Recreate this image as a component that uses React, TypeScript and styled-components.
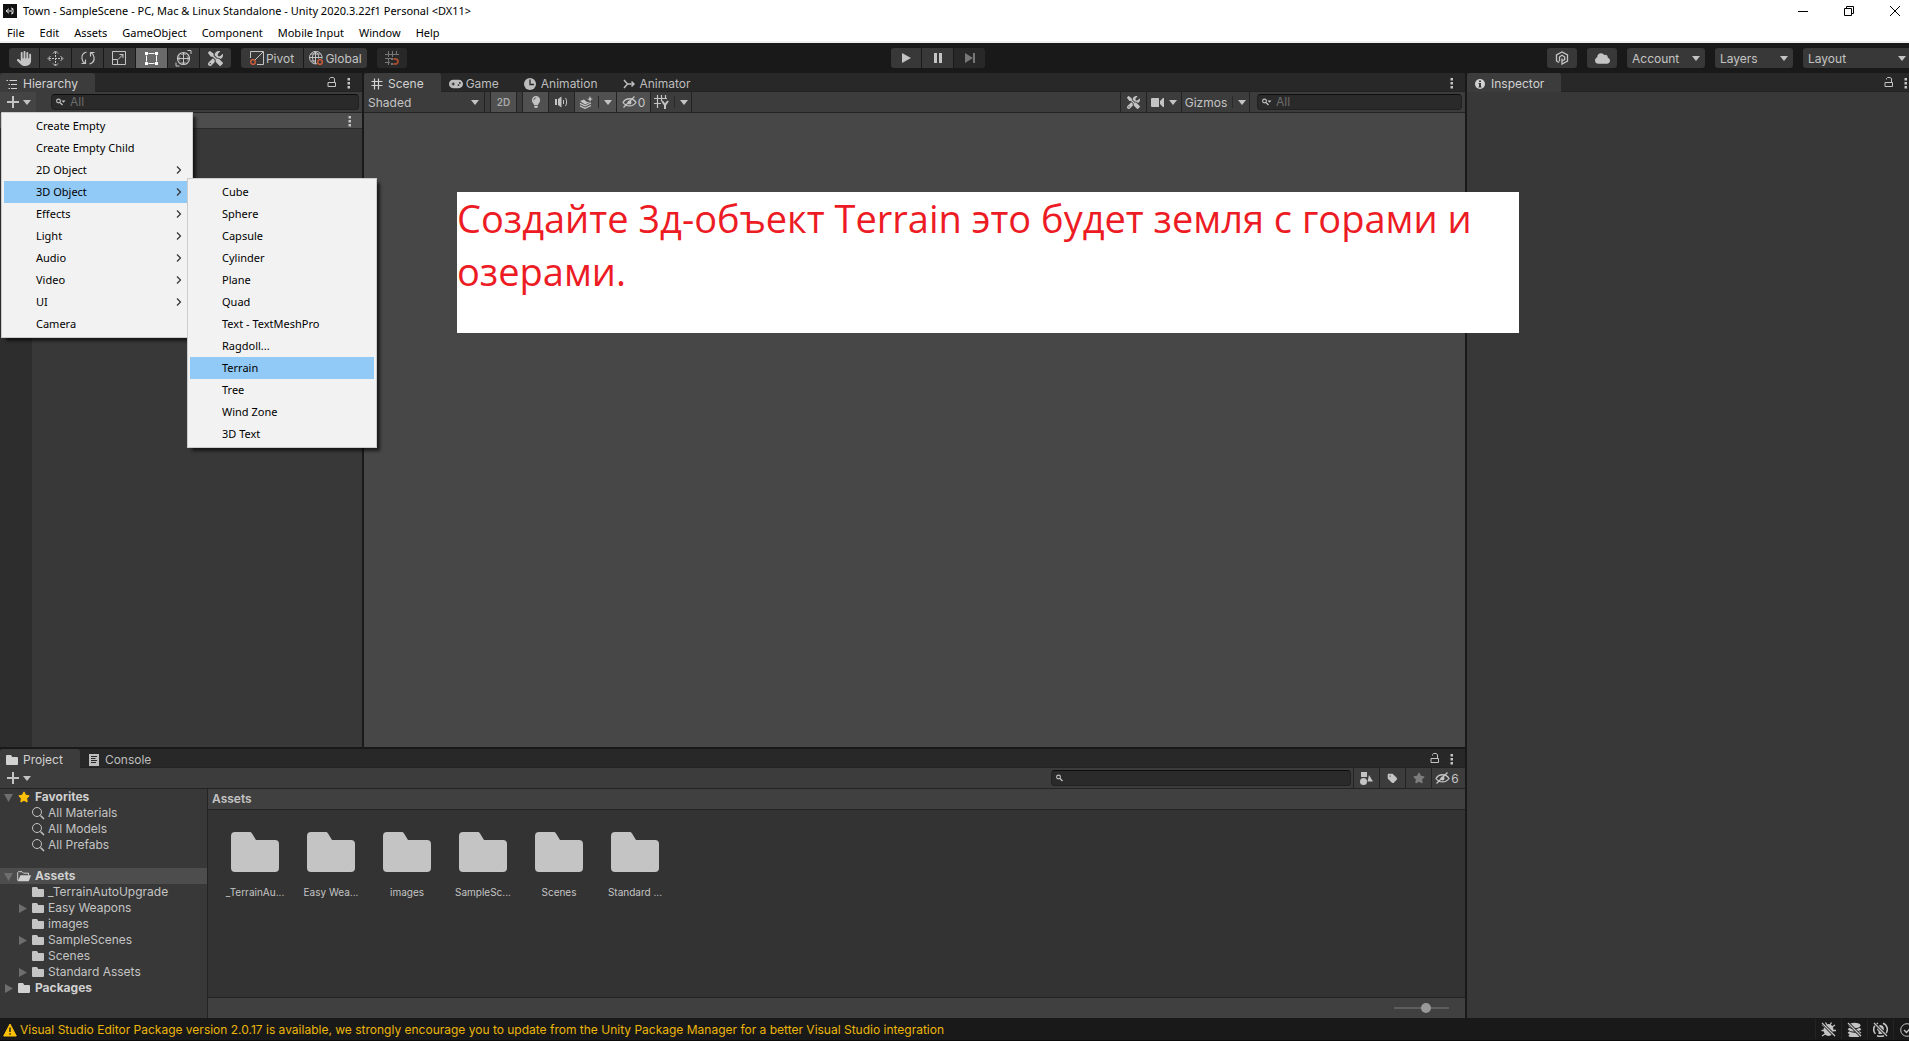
import React from 'react';
import styled, { createGlobalStyle, css } from 'styled-components';
import { FaHand, FaCloud, FaStar, FaGamepad, FaScrewdriverWrench, FaTag, FaLightbulb } from 'react-icons/fa6';

const ui = `Inter, "Liberation Sans", sans-serif`;
const system = `"Noto Sans", "Open Sans", sans-serif`;

const c = {
  chrome: '#191919',
  line: '#232323',
  tabs: '#282828',
  bar: '#3c3c3c',
  panel: '#383838',
  text: '#c4c4c4',
  active: '#505050',
};

const GlobalStyle = createGlobalStyle`
  *, *::before, *::after { box-sizing: border-box; }
  body { margin: 0; background: ${c.chrome}; overflow: hidden; }
  button, input, select { font: inherit; color: inherit; border: 0; margin: 0; padding: 0; background: none; border-radius: 0; outline: none; }
  ul { list-style: none; margin: 0; padding: 0; }
  svg { display: block; flex: none; }
`;

/* ---------- window ---------- */

const Window = styled.div`
  display: flex;
  flex-direction: column;
  height: 100vh;
  overflow: hidden;
  font: 12px/16px ${ui};
  color: ${c.text};
  white-space: nowrap;
`;

const TitleBar = styled.header`
  display: flex;
  align-items: center;
  height: 22px;
  padding-left: 3px;
  background: #fff;
  color: #000;
  font: 11px/16px ${system};
`;

const TitleText = styled.h1`
  margin: 0 0 0 6px;
  flex: 1;
  font: inherit;
`;

const WindowButton = styled.button`
  display: grid;
  place-items: center;
  width: 46px;
  height: 22px;
  &:last-child { margin-right: -9px; }
`;

const MenuBar = styled.nav`
  display: flex;
  gap: 1px;
  height: 21px;
  background: #fff;
  border-bottom: 2px solid #f0f0f0;
  color: #000;
  font: 11px/20px ${system};
`;

const MenuBarItem = styled.button`
  padding: 0 7px;
  height: 21px;
`;

/* ---------- main toolbar ---------- */

const MainToolbar = styled.div`
  display: grid;
  grid-template-columns: minmax(0, 42fr) auto minmax(0, 44fr);
  align-items: center;
  height: 30px;
  padding-left: 9px;
`;

const ToolSide = styled.div<{ $end?: boolean }>`
  display: flex;
  gap: 10px;
  justify-content: ${(p) => (p.$end ? 'flex-end' : 'flex-start')};
  ${(p) => p.$end && 'margin-right: -2px;'}
`;

const ButtonGroup = styled.div`
  display: flex;
  gap: 1px;
  border-radius: 3px;
  overflow: hidden;
`;

const ToolButton = styled.button<{ $w?: number; $on?: boolean; $dim?: boolean }>`
  display: flex;
  align-items: center;
  justify-content: center;
  gap: 2px;
  width: ${(p) => p.$w ?? 31}px;
  height: 20px;
  background: ${(p) => (p.$on ? '#6a6a6a' : p.$dim ? '#282828' : c.panel)};
  color: ${(p) => (p.$on ? '#fff' : p.$dim ? '#777' : c.text)};
`;

const Caption = styled.span`
  padding-top: 1px;
`;

const SelectBox = styled.label<{ $w: number; $bare?: boolean }>`
  display: grid;
  align-items: center;
  width: ${(p) => p.$w}px;
  height: 20px;
  background: ${(p) => (p.$bare ? 'transparent' : c.panel)};
  border-radius: ${(p) => (p.$bare ? 0 : 3)}px;
  > * { grid-area: 1 / 1; }
  > svg { justify-self: end; margin-right: 5px; pointer-events: none; }
`;

const Select = styled.select<{ $pad?: number }>`
  appearance: none;
  width: 100%;
  height: 20px;
  padding: 1px ${(p) => p.$pad ?? 5}px 0;
`;

/* ---------- panels ---------- */

const Workspace = styled.main`
  flex: 1;
  min-height: 0;
  display: grid;
  grid-template-columns: minmax(0, 1fr) 442px;
  gap: 2px;
`;

const LeftArea = styled.div`
  display: grid;
  grid-template-rows: minmax(0, 1fr) 269px;
  gap: 2px;
`;

const UpperArea = styled.div`
  display: grid;
  grid-template-columns: 362px minmax(0, 1fr);
  gap: 2px;
`;

const Panel = styled.section`
  display: flex;
  flex-direction: column;
  min-width: 0;
  min-height: 0;
  background: ${c.panel};
`;

const TabBar = styled.div`
  display: flex;
  gap: 1px;
  height: 19px;
  background: ${c.tabs};
  box-shadow: inset 0 -1px ${c.line};
`;

const Tab = styled.button<{ $on?: boolean; $flush?: boolean }>`
  display: flex;
  align-items: center;
  gap: 5px;
  height: 19px;
  padding: 2px 17px 0 ${(p) => (p.$flush ? 6 : 7)}px;
  color: ${(p) => (p.$on ? '#d2d2d2' : '#bdbdbd')};
  ${(p) => p.$on && css`background: ${c.bar}; border-radius: 3px 3px 0 0;`}
`;

const Slot = styled.span`
  display: grid;
  place-items: center;
  width: 12px;
  height: 16px;
`;

const TabTools = styled.div<{ $overhang?: boolean }>`
  display: flex;
  align-items: center;
  gap: 5px;
  margin: 0 ${(p) => (p.$overhang ? -3 : 7)}px 0 auto;
`;

const IconButton = styled.button`
  display: grid;
  place-items: center;
  width: 12px;
  height: 16px;
`;

const PanelBar = styled.div`
  display: flex;
  align-items: center;
  height: 21px;
  padding-right: 3px;
  background: ${c.bar};
  border-bottom: 1px solid ${c.line};
`;

const Spacer = styled.span<{ $w?: number }>`
  ${(p) => (p.$w ? `width: ${p.$w}px;` : 'flex: 1;')}
`;

const Anchor = styled.div`
  position: relative;
`;

const AddButton = styled.button<{ $on?: boolean }>`
  display: flex;
  align-items: center;
  gap: 4px;
  width: 36px;
  height: 20px;
  padding-left: 7px;
  background: ${(p) => (p.$on ? '#444' : 'transparent')};
`;

const SearchBox = styled.label<{ $w?: number }>`
  display: flex;
  align-items: center;
  gap: 4px;
  ${(p) => (p.$w ? `width: ${p.$w}px;` : 'flex: 1;')}
  height: 16px;
  padding: 0 4px;
  background: #2a2a2a;
  border: 1px solid #212121;
  border-top-color: #0d0d0d;
  border-radius: 4px;
`;

const SearchInput = styled.input`
  flex: 1;
  min-width: 0;
  height: 14px;
  &::placeholder { color: #6c6c6c; opacity: 1; }
`;

const BarButton = styled.button<{ $w: number; $on?: boolean; $dim?: boolean; $open?: boolean }>`
  display: flex;
  align-items: center;
  justify-content: center;
  gap: 1px;
  width: ${(p) => p.$w}px;
  height: 20px;
  border-left: 1px solid ${c.line};
  background: ${(p) => (p.$on ? c.active : 'transparent')};
  color: ${(p) => (p.$dim ? '#7d7d7d' : c.text)};
  ${(p) => p.$open && `border-right: 1px solid ${c.line};`}
`;

const Separator = styled.span`
  width: 6px;
  height: 20px;
  border-left: 1px solid ${c.line};
`;

const SmallCaption = styled.span`
  font-size: 10px;
  font-weight: 600;
  color: #a8a8a8;
`;

const Divider = styled.i`
  width: 1px;
  height: 12px;
  margin: 0 4px;
  background: #2a2a2a;
`;

const HierarchyBody = styled.div`
  flex: 1;
  background: linear-gradient(to right, #2d2d2d 32px, ${c.panel} 32px);
`;

const SceneRow = styled.div`
  display: flex;
  justify-content: flex-end;
  align-items: center;
  height: 16px;
  padding-right: 6px;
  background: #4d4d4d;
  border-bottom: 1px solid #2a2a2a;
`;

const SceneBody = styled.div`
  position: relative;
  flex: 1;
  background: #474747;
`;

const Note = styled.p`
  position: absolute;
  z-index: 1;
  left: 93px;
  top: 79px;
  width: 1062px;
  height: 141px;
  margin: 0;
  background: #fff;
  color: #ed1c24;
  font: 38px/53px "Open Sans", "Noto Sans", sans-serif;
  white-space: normal;
`;

/* ---------- pop-up menus ---------- */

const Menu = styled.ul<{ $w: number }>`
  position: absolute;
  z-index: 2;
  left: 1px;
  top: 20px;
  width: ${(p) => p.$w}px;
  padding: 2px;
  background: #f2f2f2;
  border: 1px solid #ccc;
  box-shadow: 4px 4px 3px -1px rgba(0, 0, 0, 0.6);
  color: #000;
  font: 11px/22px ${system};
`;

const SubMenu = styled(Menu)`
  left: 183px;
  top: -3px;
`;

const MenuItem = styled.li`
  position: relative;
`;

const MenuButton = styled.button<{ $on?: boolean }>`
  display: flex;
  align-items: center;
  justify-content: space-between;
  width: 100%;
  height: 22px;
  padding: 0 8px 0 32px;
  background: ${(p) => (p.$on ? '#91c9f7' : 'transparent')};
`;

/* ---------- project panel ---------- */

const ProjectBody = styled.div`
  flex: 1;
  min-height: 0;
  display: grid;
  grid-template-columns: 208px minmax(0, 1fr);
`;

const Tree = styled.ul`
  border-right: 1px solid ${c.line};
`;

const TreeRow = styled.li<{ $level?: number; $on?: boolean; $gap?: boolean }>`
  display: flex;
  align-items: center;
  height: 16px;
  padding-left: ${(p) => (p.$level ? 16 : 2)}px;
  margin-top: ${(p) => (p.$gap ? 15 : 0)}px;
  font-weight: ${(p) => (p.$level ? 400 : 700)};
  color: ${(p) => (p.$level ? c.text : '#d0d0d0')};
  background: ${(p) => (p.$on ? '#4d4d4d' : 'transparent')};
`;

const Twisty = styled.button`
  display: grid;
  place-items: center start;
  width: 14px;
  height: 16px;
  padding-left: 2px;
  color: #6e6e6e;
`;

const TreeIcon = styled.span<{ $level?: number }>`
  display: grid;
  place-items: center;
  width: 16px;
  margin-right: ${(p) => (p.$level ? 2 : 3)}px;
`;

const Browser = styled.div`
  display: flex;
  flex-direction: column;
  background: #333;
`;

const PathBar = styled.div`
  height: 21px;
  padding: 2px 4px;
  background: #404040;
  border-bottom: 1px solid ${c.line};
  font-weight: 600;
`;

const AssetGrid = styled.ul`
  flex: 1;
  display: flex;
  padding: 22px 0 0 9px;
`;

const Asset = styled.li`
  display: flex;
  flex-direction: column;
  align-items: center;
  gap: 13px;
  width: 76px;
  font-size: 10px;
  line-height: 14px;
`;

const ZoomBar = styled.label`
  display: flex;
  justify-content: flex-end;
  align-items: center;
  height: 21px;
  padding-right: 16px;
  background: #404040;
  border-top: 1px solid ${c.line};
`;

const Range = styled.input`
  appearance: none;
  width: 55px;
  height: 10px;
  background: linear-gradient(#5e5e5e, #5e5e5e) center / 100% 2px no-repeat;
  &::-webkit-slider-thumb {
    appearance: none;
    width: 10px;
    height: 10px;
    border-radius: 50%;
    background: #999;
  }
`;

/* ---------- status bar ---------- */

const StatusBar = styled.footer`
  display: flex;
  align-items: center;
  height: 23px;
  padding-left: 3px;
  border-bottom: 1px solid #0a0a0a;
`;

const StatusText = styled.button`
  display: flex;
  align-items: center;
  gap: 3px;
  padding-top: 1px;
  color: #ecb60a;
`;

const StatusTools = styled.div`
  display: flex;
  margin: 0 -10px 0 auto;
`;

const StatusButton = styled.button`
  display: grid;
  place-items: center;
  width: 26px;
  height: 20px;
  padding-top: 1px;
  border-left: 1px solid #242424;
`;

/* ---------- icons ---------- */

type IconProps = { w?: number; h?: number; box?: string; children: React.ReactNode };
const Icon = ({ w = 16, h = w, box = '0 0 16 16', children }: IconProps) => (
  <svg width={w} height={h} viewBox={box} fill="none" stroke="currentColor" aria-hidden="true">
    {children}
  </svg>
);
const solid = { fill: 'currentColor', stroke: 'none' };

const Caret = () => <Icon w={8} h={5} box="0 0 8 5"><path {...solid} d="M0 0h8L4 5z" /></Icon>;
const Dots = () => <Icon w={4} h={12} box="0 0 4 12"><path {...solid} d="M.5 1h2.500v2.500h-2.500zM.5 5h2.500v2.500h-2.500zM.5 9h2.500v2.500h-2.500z" /></Icon>;
const Plus = () => <Icon w={12} box="0 0 12 12"><path strokeWidth="2" d="M6 0v12M0 6h12" /></Icon>;
const Lock = () => <Icon w={10} h={11} box="0 0 10 11"><path d="M1 5.500h7.500v4h-7.500zM2.500 2.500v-1l1-1h2.500l1.500 1v4" /></Icon>;
const Lens = ({ arrow }: { arrow?: boolean }) => (
  <Icon w={10} h={8} box="0 0 10 8">
    <circle cx="2.500" cy="3" r="1.900" strokeWidth="1.100" />
    <path strokeWidth="1.200" d="M4 4.500L6.500 7" />
    {arrow && <path {...solid} d="M5.500 2.500h4l-2 2.200z" />}
  </Icon>
);
const BigLens = () => <Icon w={14} box="0 0 14 14"><circle cx="6" cy="6" r="4.500" /><path strokeWidth="1.500" d="M9.500 9.500L13 13" /></Icon>;
const ListIcon = () => <Icon w={12} box="0 0 12 12"><path d="M3.500 2.500H11M5 6.500H11M5 10.500H11M.5 2.500H2M2.500 6.500H4M2.500 10.500H4" /></Icon>;
const Hash = () => <Icon w={12} box="0 0 12 12"><path strokeWidth="1.200" d="M3.500 .5v11M7.500 .5v11M.5 3.500h11M.5 7.500h11" /></Icon>;
const Clock = () => <Icon w={12} box="0 0 12 12"><circle cx="6" cy="6" r="6" {...solid} /><path stroke={c.tabs} strokeWidth="1.300" d="M6 1.500v5h4" /></Icon>;
const Flow = () => <Icon w={12} box="0 0 12 12"><path strokeWidth="1.500" d="M1 2l3.500 4L1 10M4.500 6H11M8.500 3.500L11 6 8.500 8.500" /></Icon>;
const Info = () => <Icon w={10} box="0 0 10 10"><circle cx="5" cy="5" r="5" {...solid} /><path stroke={c.bar} strokeWidth="2" d="M5 1.500v1.500M5 4v4" /><path stroke={c.bar} d="M3.500 4.500H5M3.500 8h3" /></Icon>;
const Page = () => <Icon w={10} h={12} box="0 0 10 12"><path {...solid} d="M0 0h10v12H0z" /><path stroke={c.tabs} d="M2 2.500h6M2 4.500h4.500M2 6.500h6M2 8.500h5" /></Icon>;
const Folder = ({ w = 12, h = 10 }: { w?: number; h?: number }) => (
  <Icon w={w} h={h} box="0 0 48 40">
    <path {...solid} d="M4 0h14.500c1.500 0 2 .6 2.700 1.700L25 8h19a4 4 0 0 1 4 4v24a4 4 0 0 1-4 4H4a4 4 0 0 1-4-4V4a4 4 0 0 1 4-4z" />
  </Icon>
);
const OpenFolder = () => (
  <Icon w={14} h={11} box="0 0 14 11">
    <path d="M.7 9.500V1.500l.8-.8h3.500l1.500 1.500h5v2" />
    <path {...solid} d="M3.500 4.200H14l-2.200 6H.7z" />
  </Icon>
);
const Move = () => (
  <Icon w={17} box="0 0 17 17">
    <path strokeDasharray="2 1" d="M8.500 2v13M2 8.500h13" />
    <path d="M6 3.500L8.500 1 11 3.500M6 13.500L8.500 16 11 13.500M3.500 6L1 8.500 3.500 11M13.500 6L16 8.500 13.500 11" />
  </Icon>
);
const Rotate = () => (
  <Icon w={16}>
    <path strokeWidth="1.200" d="M6.500 2C3 3 1.500 6 2 9c.3 2 1.500 3.500 3 4.500M1.500 13.500h4v-4M9.500 14c3.500-1 5-4 4.500-7-.3-2-1.500-3.500-3-4.500M14.500 2.500h-4v4" />
  </Icon>
);
const Scale = () => <Icon w={15} box="0 0 15 15"><path d="M.5 .5h13v13H.5zM.5 8.500h5v5M6 8.500L11 3.500M7.500 3.500h3.500V7" /></Icon>;
const Rect = () => (
  <Icon w={15} box="0 0 15 15">
    <path d="M4.500 2.500h6M4.500 12.500h6M2.500 4.500v6M12.500 4.500v6" />
    <path {...solid} d="M1 1h3v3H1zM11 1h3v3h-3zM1 11h3v3H1zM11 11h3v3h-3z" />
  </Icon>
);
const Transform = () => (
  <Icon w={17} box="0 0 17 17">
    <circle cx="8.500" cy="8.500" r="6" strokeWidth="1.200" />
    <path d="M8.500 3v11M3 8.500h11M6.500 5L8.500 3l2 2M6.500 12l2 2 2-2M5 6.500l-2 2 2 2M12 6.500l2 2-2 2M12.500 .5H16V4M1 12.500V16h3.500" />
  </Icon>
);
const Pivot = () => (
  <Icon w={14} box="0 0 14 14">
    <path d="M.5 7V.5h13v13H7M4.500 9.500L13 1" />
    <circle cx="3" cy="11" r="2.300" stroke="#e0623c" strokeWidth="1.300" />
  </Icon>
);
const Globe = () => (
  <Icon w={14} box="0 0 14 14">
    <path d="M8 12.800a6.300 6.300 0 1 1 5-5M6.500 .5v12.500M.5 6.500h12.500M2 3h9.500M2 10h5M6.500 .5C2.500 4 2.500 9 6.500 13M6.500 .5c3 2 3.500 5 3 7" />
    <circle cx="11" cy="11" r="2.300" stroke="#e0623c" strokeWidth="1.300" />
  </Icon>
);
const Snap = () => (
  <Icon w={15} box="0 0 15 15">
    <path d="M3.500 0v6M7.500 0v6M11.500 0v4M0 3.500h14M0 7.500h6M3.500 7v7M0 11.500h5" />
    <path stroke="#a04a30" strokeWidth="2" d="M8.500 8h2a2.500 2.500 0 0 1 0 5h-2" />
    <path {...solid} d="M6 7h2v2H6zM6 12h2v2H6z" />
  </Icon>
);
const Play = () => <Icon w={9} h={10} box="0 0 9 10"><path {...solid} d="M0 0l9 5-9 5z" /></Icon>;
const Pause = () => <Icon w={8} h={10} box="0 0 8 10"><path {...solid} d="M0 0h3v10H0zM5 0h3v10H5z" /></Icon>;
const Step = () => <Icon w={10} h={10} box="0 0 10 10"><path {...solid} d="M0 0l8 5-8 5zM8 0h2v10H8z" /></Icon>;
const Collab = () => (
  <Icon w={14} box="0 0 14 14">
    <path strokeWidth="1.300" d="M4 11.500L1.500 10V4L7 1l5.500 3v6L7 13V7.500" />
    <path strokeWidth="1.300" d="M4.500 10.500V6L7 4.300 9.700 6v2.500L7 10" />
  </Icon>
);
const Speaker = () => (
  <Icon w={13} h={12} box="0 0 13 12">
    <path {...solid} d="M0 3h2v6H0zM3 3l3.500-2.500v11L3 9z" />
    <path d="M8.500 4v4M10.500 2c1.500 2 1.500 6 0 8" />
  </Icon>
);
const Layers = () => (
  <Icon w={14} h={13} box="0 0 14 13">
    <path {...solid} d="M1 5l4-1.500L8 6h3L6 8.500zM11 0l1 2.500 2 .5-2 .8L11 6l-1-2.200L8 3l2-.5z" />
    <path strokeWidth="1.300" d="M1 7.300L6 9.800 12 7M1 9.800L6 12.300 12 9.500" />
  </Icon>
);
const EyeOff = () => (
  <Icon w={15} h={12} box="0 0 15 12">
    <path strokeWidth="1.300" d="M1 6.500C4 1.500 11 1.500 14 6.500 11 11 4 11 1 6.500zM1.500 11.500L12.500 .5" />
    <circle cx="7.500" cy="6.500" r="2" {...solid} />
  </Icon>
);
const GridY = () => (
  <Icon w={15} h={14} box="0 0 15 14">
    <path strokeWidth="1.200" d="M3.500 0v13M7.500 0v6M11.500 0v4M0 3.500h13M0 8.500h7" />
    <path strokeWidth="2" d="M8 6l3 4 3-4M11 10v4" />
  </Icon>
);
const Camera = () => <Icon w={13} h={9} box="0 0 13 9"><path {...solid} d="M1 0h7v9H1a1 1 0 0 1-1-1V1a1 1 0 0 1 1-1zM9 3l3-3h1v9h-1L9 6z" /></Icon>;
const Shapes = () => (
  <Icon w={13} box="0 0 13 13">
    <path {...solid} d="M1 0h6v5H1zM9 3l4 6.500H7.500z" />
    <circle cx="3.500" cy="9.500" r="3.500" {...solid} />
  </Icon>
);
const Warning = () => (
  <Icon w={14} h={14} box="0 0 14 14">
    <path d="M7 1L13.300 13H.7z" fill="#ffc107" stroke="#ffc107" strokeLinejoin="round" />
    <path stroke="#222" strokeWidth="1.500" d="M7 4.500V9M7 10.200v1.500" />
  </Icon>
);
const Slash = () => <><path stroke={c.chrome} strokeWidth="3" d="M1 1l13 13" /><path strokeWidth="1.300" d="M1 1l13 13" /></>;
const BugOff = () => (
  <Icon w={15} box="0 0 15 15">
    <ellipse cx="7.500" cy="8" rx="5" ry="6" {...solid} />
    <path strokeWidth="1.300" d="M1 3l3 2M14 3l-3 2M.5 8.500H15M1 14l3-2M14 14l-3-2M4.500 .5L6 3M10.500 .5L9 3" />
    <Slash />
  </Icon>
);
const DataOff = () => (
  <Icon w={15} box="0 0 15 15">
    <ellipse cx="7.500" cy="3.500" rx="6" ry="2.700" {...solid} />
    <path strokeWidth="2.300" d="M1.500 6.500c2 2.500 10 2.500 12 0M1.500 10c2 2.500 10 2.500 12 0M2 13c2 1.500 9 1.500 11 0" />
    <Slash />
  </Icon>
);
const LightOff = () => (
  <Icon w={15} box="0 0 15 15">
    <path strokeWidth="1.600" d="M5 1.200a6.500 6.500 0 0 0-2.500 10.600M10 1.200a6.500 6.500 0 0 1 2.500 10.600M4 13.700c2 .8 5 .8 7 0" />
    <path {...solid} d="M7.500 3a3.500 3.500 0 0 1 2 6.300V12h-4V9.300A3.500 3.500 0 0 1 7.500 3z" />
    <Slash />
  </Icon>
);
const Done = () => <Icon w={14} box="0 0 14 14"><circle cx="7" cy="7" r="6.300" /><path strokeWidth="1.300" d="M4 7l2.500 2.500L10.500 5" /></Icon>;
const ChevronRight = () => <Icon w={6} h={8} box="0 0 6 8"><path stroke="#333" strokeWidth="1.200" d="M1 .5L4.500 4 1 7.500" /></Icon>;
const UnityMark = () => (
  <Icon w={14} box="0 0 14 14">
    <path fill="#111" stroke="none" d="M0 0h14v14H0z" />
    <path stroke="#ddd" d="M3 7h4.500M7.500 7L10 4.800M7.500 7l2.500 2.200M3 7l3-2.300M3 7l3 2.300M8 4l2 .7v4.600L8 10" />
  </Icon>
);
const Twist = ({ open }: { open?: boolean }) => (
  <Icon w={9} box="0 0 9 9"><path {...solid} d={open ? 'M0 1h9L4.500 9z' : 'M1 0l8 4.500L1 9z'} /></Icon>
);

/* ---------- data ---------- */

const menuBar = ['File', 'Edit', 'Assets', 'GameObject', 'Component', 'Mobile Input', 'Window', 'Help'];

const createMenu: [string, boolean][] = [
  ['Create Empty', false], ['Create Empty Child', false], ['2D Object', true], ['3D Object', true],
  ['Effects', true], ['Light', true], ['Audio', true], ['Video', true], ['UI', true], ['Camera', false],
];

const objectMenu = [
  'Cube', 'Sphere', 'Capsule', 'Cylinder', 'Plane', 'Quad', 'Text - TextMeshPro', 'Ragdoll...',
  'Terrain', 'Tree', 'Wind Zone', '3D Text',
];

type Node = { name: string; level?: number; kind: 'star' | 'lens' | 'open' | 'folder'; twisty?: 'open' | 'closed'; on?: boolean };
const tree: Node[] = [
  { name: 'Favorites', kind: 'star', twisty: 'open' },
  { name: 'All Materials', level: 1, kind: 'lens' },
  { name: 'All Models', level: 1, kind: 'lens' },
  { name: 'All Prefabs', level: 1, kind: 'lens' },
  { name: 'Assets', kind: 'open', twisty: 'open', on: true },
  { name: '_TerrainAutoUpgrade', level: 1, kind: 'folder' },
  { name: 'Easy Weapons', level: 1, kind: 'folder', twisty: 'closed' },
  { name: 'images', level: 1, kind: 'folder' },
  { name: 'SampleScenes', level: 1, kind: 'folder', twisty: 'closed' },
  { name: 'Scenes', level: 1, kind: 'folder' },
  { name: 'Standard Assets', level: 1, kind: 'folder', twisty: 'closed' },
  { name: 'Packages', kind: 'folder', twisty: 'closed' },
];

const treeIcons = {
  star: <FaStar size={12} color="#ffc107" />,
  lens: <BigLens />,
  open: <OpenFolder />,
  folder: <Folder />,
};

const assets = ['_TerrainAu...', 'Easy Wea...', 'images', 'SampleSc...', 'Scenes', 'Standard ...'];

const tools: [string, React.ReactNode, number][] = [
  ['Hand', <FaHand size={15} />, 30], ['Move', <Move />, 31], ['Rotate', <Rotate />, 31], ['Scale', <Scale />, 31],
  ['Rect', <Rect />, 31], ['Transform', <Transform />, 31], ['Custom tools', <FaScrewdriverWrench size={15} />, 31],
];

/* ---------- parts ---------- */

const Dropdown = ({ label, value, w, bare }: { label: string; value: string; w: number; bare?: boolean }) => (
  <SelectBox $w={w} $bare={bare}>
    <Select aria-label={label} $pad={bare ? 4 : 5}><option>{value}</option></Select>
    <Caret />
  </SelectBox>
);

const PanelTab = ({ icon, name, on, flush }: { icon: React.ReactNode; name: string; on?: boolean; flush?: boolean }) => (
  <Tab role="tab" aria-selected={!!on} $on={on} $flush={flush}><Slot>{icon}</Slot>{name}</Tab>
);

const TabActions = ({ lock, overhang }: { lock?: boolean; overhang?: boolean }) => (
  <TabTools $overhang={overhang}>
    {lock && <IconButton aria-label="Lock"><Lock /></IconButton>}
    <IconButton aria-label="More"><Dots /></IconButton>
  </TabTools>
);

const CreateMenu = () => (
  <Menu role="menu" $w={192}>
    {createMenu.map(([name, more]) => {
      const open = name === '3D Object';
      return (
        <MenuItem key={name} role="none">
          <MenuButton role="menuitem" $on={open}>{name}{more && <ChevronRight />}</MenuButton>
          {open && (
            <SubMenu role="menu" $w={190}>
              {objectMenu.map((item) => (
                <MenuItem key={item} role="none">
                  <MenuButton role="menuitem" $on={item === 'Terrain'}>{item}</MenuButton>
                </MenuItem>
              ))}
            </SubMenu>
          )}
        </MenuItem>
      );
    })}
  </Menu>
);

const Hierarchy = () => (
  <Panel>
    <TabBar role="tablist">
      <PanelTab icon={<ListIcon />} name="Hierarchy" on flush />
      <TabActions lock />
    </TabBar>
    <PanelBar>
      <Anchor>
        <AddButton aria-label="Create" $on><Plus /><Caret /></AddButton>
        <CreateMenu />
      </Anchor>
      <Spacer $w={15} />
      <SearchBox><Lens arrow /><SearchInput aria-label="Search hierarchy" placeholder="All" /></SearchBox>
    </PanelBar>
    <HierarchyBody>
      <SceneRow><IconButton aria-label="Scene options"><Dots /></IconButton></SceneRow>
    </HierarchyBody>
  </Panel>
);

const Scene = () => (
  <Panel>
    <TabBar role="tablist">
      <PanelTab icon={<Hash />} name="Scene" on />
      <PanelTab icon={<FaGamepad size={14} />} name="Game" />
      <PanelTab icon={<Clock />} name="Animation" />
      <PanelTab icon={<Flow />} name="Animator" />
      <TabActions />
    </TabBar>
    <PanelBar>
      <Dropdown label="Draw mode" value="Shaded" w={120} bare />
      <Separator />
      <BarButton $w={27} $on $open><SmallCaption>2D</SmallCaption></BarButton>
      <Spacer $w={5} />
      <BarButton $w={26} $on aria-label="Lighting"><FaLightbulb size={12} /></BarButton>
      <BarButton $w={26} aria-label="Audio"><Speaker /></BarButton>
      <BarButton $w={42} $on aria-label="Effects"><Layers /><Divider /><Caret /></BarButton>
      <BarButton $w={34} $on aria-label="Hidden objects"><EyeOff /><Caption>0</Caption></BarButton>
      <BarButton $w={42} $open aria-label="Grid"><GridY /><Divider /><Caret /></BarButton>
      <Spacer />
      <BarButton $w={26} aria-label="Tools"><FaScrewdriverWrench size={13} /></BarButton>
      <BarButton $w={35} aria-label="Camera"><Camera /><Spacer $w={3} /><Caret /></BarButton>
      <BarButton $w={69} $open><Caption>Gizmos</Caption><Divider /><Caret /></BarButton>
      <Spacer $w={7} />
      <SearchBox $w={205}><Lens arrow /><SearchInput aria-label="Search scene" placeholder="All" /></SearchBox>
    </PanelBar>
    <SceneBody>
      <Note>Создайте 3д-объект Terrain это будет земля с горами и озерами.</Note>
    </SceneBody>
  </Panel>
);

const Project = () => (
  <Panel>
    <TabBar role="tablist">
      <PanelTab icon={<Folder />} name="Project" on flush />
      <PanelTab icon={<Page />} name="Console" />
      <TabActions lock />
    </TabBar>
    <PanelBar>
      <AddButton aria-label="Create asset"><Plus /><Caret /></AddButton>
      <Spacer />
      <SearchBox $w={300}><Lens /><SearchInput aria-label="Search project" /></SearchBox>
      <Spacer $w={2} />
      <BarButton $w={26} aria-label="Search by type"><Shapes /></BarButton>
      <BarButton $w={26} aria-label="Search by label"><FaTag size={11} /></BarButton>
      <BarButton $w={26} $dim aria-label="Save search"><FaStar size={12} /></BarButton>
      <BarButton $w={31} aria-label="Hidden packages"><EyeOff /><Caption>6</Caption></BarButton>
    </PanelBar>
    <ProjectBody>
      <Tree>
        {tree.map((n) => (
          <TreeRow key={n.name} $level={n.level} $on={n.on} $gap={n.on}>
            {n.twisty ? <Twisty aria-label={`Toggle ${n.name}`}><Twist open={n.twisty === 'open'} /></Twisty> : <Spacer $w={14} />}
            <TreeIcon $level={n.level}>{treeIcons[n.kind]}</TreeIcon>
            {n.name}
          </TreeRow>
        ))}
      </Tree>
      <Browser>
        <PathBar>Assets</PathBar>
        <AssetGrid>
          {assets.map((name) => (
            <Asset key={name}><Folder w={48} h={40} />{name}</Asset>
          ))}
        </AssetGrid>
        <ZoomBar><Range type="range" aria-label="Icon size" defaultValue={60} /></ZoomBar>
      </Browser>
    </ProjectBody>
  </Panel>
);

export default function App() {
  return (
    <Window>
      <GlobalStyle />
      <TitleBar>
        <UnityMark />
        <TitleText>Town - SampleScene - PC, Mac &amp; Linux Standalone - Unity 2020.3.22f1 Personal &lt;DX11&gt;</TitleText>
        <WindowButton aria-label="Minimize"><Icon w={10} box="0 0 10 10"><path stroke="#000" d="M0 5.500h10" /></Icon></WindowButton>
        <WindowButton aria-label="Restore"><Icon w={10} box="0 0 10 10"><path stroke="#000" d="M.5 2.500h7v7h-7zM2.500 2.500v-2h7v7h-2" /></Icon></WindowButton>
        <WindowButton aria-label="Close"><Icon w={10} box="0 0 10 10"><path stroke="#000" d="M0 0l10 10M10 0L0 10" /></Icon></WindowButton>
      </TitleBar>
      <MenuBar>{menuBar.map((m) => <MenuBarItem key={m}>{m}</MenuBarItem>)}</MenuBar>

      <MainToolbar>
        <ToolSide>
          <ButtonGroup>
            {tools.map(([name, icon, w]) => <ToolButton key={name} aria-label={name} $w={w} $on={name === 'Rect'}>{icon}</ToolButton>)}
          </ButtonGroup>
          <ButtonGroup>
            <ToolButton $w={62}><Pivot /><Caption>Pivot</Caption></ToolButton>
            <ToolButton $w={63}><Globe /><Caption>Global</Caption></ToolButton>
          </ButtonGroup>
          <ButtonGroup><ToolButton $w={30} $dim aria-label="Grid snapping"><Snap /></ToolButton></ButtonGroup>
        </ToolSide>
        <ButtonGroup>
          <ToolButton $w={30} aria-label="Play"><Play /></ToolButton>
          <ToolButton aria-label="Pause"><Pause /></ToolButton>
          <ToolButton $dim aria-label="Step"><Step /></ToolButton>
        </ButtonGroup>
        <ToolSide $end>
          <ButtonGroup><ToolButton $w={30} aria-label="Collaborate"><Collab /></ToolButton></ButtonGroup>
          <ButtonGroup><ToolButton $w={30} aria-label="Services"><FaCloud size={15} /></ToolButton></ButtonGroup>
          <Dropdown label="Account" value="Account" w={78} />
          <Dropdown label="Layers" value="Layers" w={78} />
          <Dropdown label="Layout" value="Layout" w={108} />
        </ToolSide>
      </MainToolbar>

      <Workspace>
        <LeftArea>
          <UpperArea>
            <Hierarchy />
            <Scene />
          </UpperArea>
          <Project />
        </LeftArea>
        <Panel>
          <TabBar role="tablist">
            <PanelTab icon={<Info />} name="Inspector" on />
            <TabActions lock overhang />
          </TabBar>
        </Panel>
      </Workspace>

      <StatusBar>
        <StatusText>
          <Warning />
          Visual Studio Editor Package version 2.0.17 is available, we strongly encourage you to update from the Unity Package Manager for a better Visual Studio integration
        </StatusText>
        <StatusTools>
          <StatusButton aria-label="Debugger"><BugOff /></StatusButton>
          <StatusButton aria-label="Cache server"><DataOff /></StatusButton>
          <StatusButton aria-label="Auto lighting"><LightOff /></StatusButton>
          <StatusButton aria-label="Progress"><Done /></StatusButton>
        </StatusTools>
      </StatusBar>
    </Window>
  );
}
